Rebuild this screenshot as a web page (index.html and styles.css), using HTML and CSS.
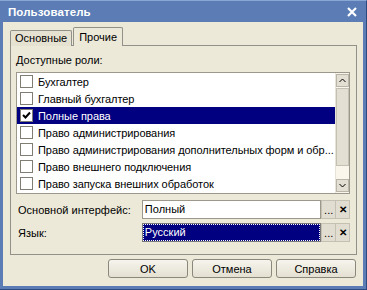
FILE: index.html
```html
<!DOCTYPE html>
<html lang="ru">
<head>
    <meta charset="UTF-8">
    <title>Пользователь</title>
    <link rel="stylesheet" href="styles.css">
</head>
<body>
    <div class="window">
        <div class="titlebar">
            <span class="title">Пользователь</span>
            <span class="close">
                <svg width="10" height="10" viewBox="0 0 10 10"><path d="M1 1L9 9M9 1L1 9" stroke="#fff" stroke-width="2.2"/></svg>
            </span>
        </div>
        <div class="client">
            <div class="tabs">
                <div class="tab">Основные</div>
                <div class="tab active">Прочие</div>
            </div>
            <div class="panel">
                <div class="caption">Доступные роли:</div>
                <div class="listbox">
                    <div class="rows">
                        <div class="row"><span class="check"></span>Бухгалтер</div>
                        <div class="row"><span class="check"></span>Главный бухгалтер</div>
                        <div class="row selected"><span class="check checked">
                            <svg width="9" height="9" viewBox="0 0 9 9"><path d="M1 4L3.5 6.5L8 1.5" stroke="#000" stroke-width="2" fill="none"/></svg>
                        </span>Полные права</div>
                        <div class="row"><span class="check"></span>Право администрирования</div>
                        <div class="row"><span class="check"></span>Право администрирования дополнительных форм и обр...</div>
                        <div class="row"><span class="check"></span>Право внешнего подключения</div>
                        <div class="row"><span class="check"></span>Право запуска внешних обработок</div>
                    </div>
                    <div class="scrollbar">
                        <div class="sb-btn">
                            <svg width="7" height="5" viewBox="0 0 7 5"><path d="M0.5 4L3.5 1L6.5 4" stroke="#000" fill="none"/></svg>
                        </div>
                        <div class="sb-thumb"></div>
                        <div class="sb-track"></div>
                        <div class="sb-btn">
                            <svg width="7" height="5" viewBox="0 0 7 5"><path d="M0.5 1L3.5 4L6.5 1" stroke="#000" fill="none"/></svg>
                        </div>
                    </div>
                </div>
                <div class="field">
                    <span class="label">Основной интерфейс:</span>
                    <div class="input">Полный</div>
                    <div class="fbtn">...</div>
                    <div class="fbtn clear">&#x2715;</div>
                </div>
                <div class="field">
                    <span class="label">Язык:</span>
                    <div class="input focused"><span>Русский</span></div>
                    <div class="fbtn">...</div>
                    <div class="fbtn clear">&#x2715;</div>
                </div>
            </div>
            <div class="buttons">
                <button class="btn">OK</button>
                <button class="btn">Отмена</button>
                <button class="btn">Справка</button>
            </div>
        </div>
    </div>
</body>
</html>
```

FILE: styles.css
```css
body {
    margin: 0;
    font-family: 'Liberation Sans', Arial, sans-serif;
    font-size: 11px;
    color: #000;
}

.window {
    width: 367px;
    height: 290px;
    box-sizing: border-box;
    background: #5b7cb5;
    padding: 0 3px 3px 3px;
    display: flex;
    flex-direction: column;
    border-top: 1px solid #8aa6d4;
    border-right: 1px solid #2b4a80;
    border-bottom: 1px solid #2b4a80;
}

.titlebar {
    height: 21px;
    display: flex;
    align-items: center;
    justify-content: space-between;
    padding: 0 6px 0 5px;
}

.title {
    color: #fff;
    font-weight: bold;
    font-size: 11.5px;
    letter-spacing: 0.1px;
}

.close {
    display: flex;
    margin-top: 1px;
}

.client {
    flex: 1;
    background: #ece9d8;
    padding: 6px 6px 0 7px;
    display: flex;
    flex-direction: column;
}

.tabs {
    display: flex;
    align-items: flex-end;
    height: 18px;
    margin-bottom: -1px;
    position: relative;
    z-index: 1;
}

.tab {
    height: 15px;
    padding: 0 4px;
    border: 1px solid #91918a;
    border-bottom: none;
    border-radius: 2px 2px 0 0;
    background: #e6e2d2;
    line-height: 15px;
}

.tab.active {
    height: 18px;
    line-height: 19px;
    background: #ece9d8;
    margin-left: 1px;
    padding: 0 5px;
}

.panel {
    border: 1px solid #91918a;
    width: 347px;
    height: 210px;
    box-sizing: border-box;
    padding: 8px 6px 0 5px;
}

.caption {
    height: 18px;
    line-height: 13px;
}

.listbox {
    height: 122px;
    box-sizing: border-box;
    border: 1px solid #9c998c;
    background: #fff;
    display: flex;
}

.rows {
    flex: 1;
    min-width: 0;
    display: flex;
    flex-direction: column;
}

.row {
    height: 17px;
    flex-shrink: 0;
    display: flex;
    align-items: center;
    white-space: nowrap;
    letter-spacing: -0.06px;
}

.row.selected {
    background: #000080;
    color: #fff;
}

.check {
    width: 11px;
    height: 11px;
    border: 1px solid #807e74;
    background: #fff;
    margin: 0 5px 0 3px;
    flex-shrink: 0;
    display: flex;
    align-items: center;
    justify-content: center;
}

.scrollbar {
    width: 13px;
    flex-shrink: 0;
    display: flex;
    flex-direction: column;
    background: #fbf6ec;
    border-left: 1px solid #e8e4d8;
}

.sb-btn {
    height: 11px;
    border: 1px solid #b9b5a8;
    background: #e3dfd2;
    display: flex;
    align-items: center;
    justify-content: center;
    margin: 1px 0;
}

.sb-thumb {
    height: 76px;
    border: 1px solid #c4c0b2;
    background: #e3dfd2;
}

.sb-track {
    flex: 1;
}

.field {
    display: flex;
    align-items: center;
    height: 19px;
    margin-top: 4px;
}

.listbox + .field {
    margin-top: 6px;
}

.label {
    width: 125px;
    padding-left: 2px;
}

.input {
    width: 177px;
    height: 17px;
    border: 1px solid #9c998c;
    background: #fff;
    line-height: 17px;
    padding-left: 2px;
}

.input.focused {
    background: #000080;
    color: #fff;
    outline: 1px dotted #fff;
    outline-offset: -2px;
    border-color: #7a7a7a;
}

.fbtn {
    width: 13px;
    height: 17px;
    border: 1px solid #c4c0b2;
    background: #e1ddd0;
    display: flex;
    align-items: center;
    justify-content: center;
    line-height: 12px;
}

.fbtn.clear {
    font-weight: bold;
    font-size: 10px;
    border-left: none;
}

.buttons {
    display: flex;
    justify-content: flex-end;
    gap: 4px;
    padding: 4px 1px 0 0;
}

.btn {
    width: 80px;
    height: 19px;
    border: 1px solid #8a877c;
    border-radius: 3px;
    background: linear-gradient(#f6f4ec, #e4e0d2);
    font-family: 'Liberation Sans', Arial, sans-serif;
    font-size: 11px;
    padding: 0;
    color: #000;
}
```
